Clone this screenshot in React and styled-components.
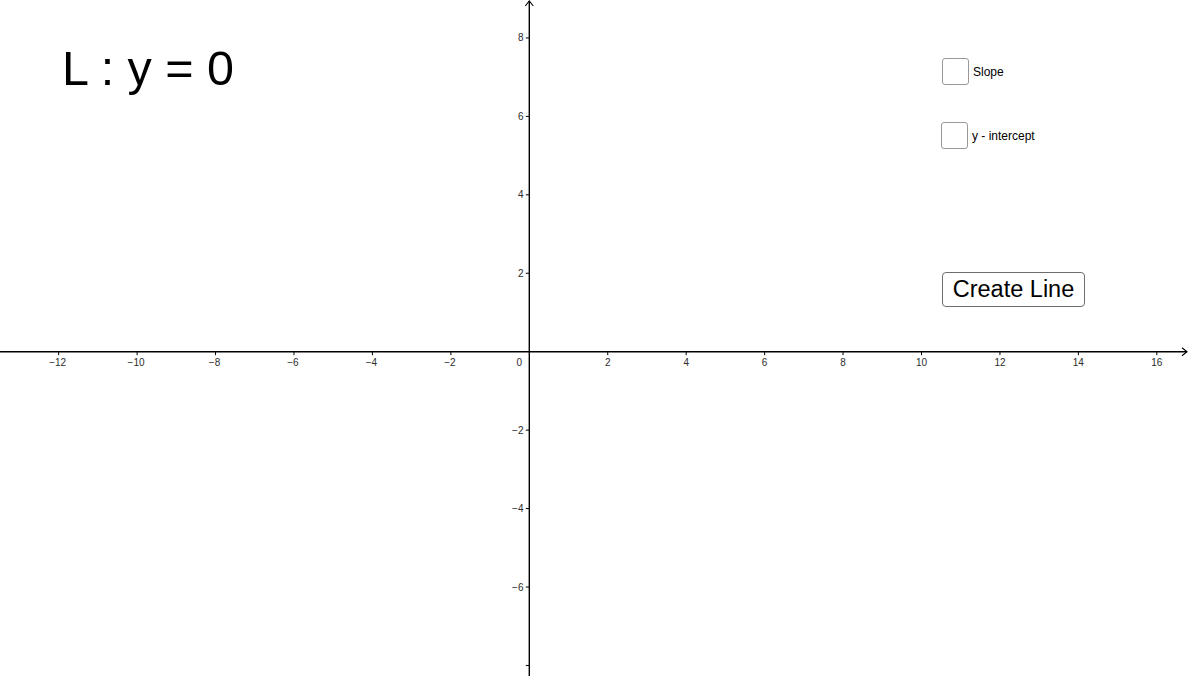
import React from "react";
import styled, { createGlobalStyle } from "styled-components";

const WIDTH = 1190;
const HEIGHT = 676;
const ORIGIN_X = 529.3;
const ORIGIN_Y = 351.7;
const UNIT = 39.22;

const GlobalStyle = createGlobalStyle`
  html, body {
    margin: 0;
    padding: 0;
    background: #ffffff;
    overflow: hidden;
  }
  body {
    font-family: "Liberation Sans", Arial, sans-serif;
  }
`;

const Canvas = styled.main`
  position: relative;
  width: ${WIDTH}px;
  height: ${HEIGHT}px;
  background: #ffffff;
  overflow: hidden;
`;

const Graph = styled.svg`
  display: block;
  width: ${WIDTH}px;
  height: ${HEIGHT}px;
  text {
    font-family: "Liberation Sans", Arial, sans-serif;
    font-size: 10px;
    fill: #2b2b2b;
  }
`;

const Equation = styled.div`
  position: absolute;
  left: 62px;
  top: 44px;
  font-size: 48.5px;
  line-height: 1;
  color: #000000;
  white-space: pre;
`;

const CheckRow = styled.label`
  position: absolute;
  left: ${(p) => p.x}px;
  top: ${(p) => p.y}px;
  display: flex;
  align-items: center;
  gap: 4px;
  font-size: 12px;
  color: #000000;
  cursor: pointer;
`;

const Box = styled.span`
  display: block;
  width: 27px;
  height: 27px;
  box-sizing: border-box;
  border: 1.5px solid #999999;
  border-radius: 3px;
  background: #ffffff;
`;

const Button = styled.button`
  position: absolute;
  left: 942px;
  top: 272px;
  width: 143px;
  height: 35px;
  box-sizing: border-box;
  padding: 0;
  border: 1.5px solid #6e6e6e;
  border-radius: 4px;
  background: #ffffff;
  font-family: "Liberation Sans", Arial, sans-serif;
  font-size: 23.5px;
  color: #000000;
  cursor: pointer;
`;

const fmt = (n) => (n < 0 ? `\u2212${Math.abs(n)}` : `${n}`);

const xTicks = [];
for (let k = -12; k <= 16; k += 2) if (k !== 0) xTicks.push(k);
const yTicks = [8, 6, 4, 2, -2, -4, -6, -8];

const Axes = () => (
  <Graph viewBox={`0 0 ${WIDTH} ${HEIGHT}`}>
    {/* x axis */}
    <line x1="0" y1={ORIGIN_Y} x2="1187" y2={ORIGIN_Y} stroke="#000" strokeWidth="1.4" />
    <polyline
      points={`1182,${ORIGIN_Y - 4} 1187,${ORIGIN_Y} 1182,${ORIGIN_Y + 4}`}
      fill="none"
      stroke="#000"
      strokeWidth="1.1"
    />
    {/* y axis */}
    <line x1={ORIGIN_X} y1="1" x2={ORIGIN_X} y2={HEIGHT} stroke="#000" strokeWidth="1.4" />
    <polyline
      points={`${ORIGIN_X - 4},6 ${ORIGIN_X},1 ${ORIGIN_X + 4},6`}
      fill="none"
      stroke="#000"
      strokeWidth="1.1"
    />

    {xTicks.map((k) => {
      const x = ORIGIN_X + k * UNIT;
      return (
        <g key={`x${k}`}>
          <line x1={x} y1={ORIGIN_Y} x2={x} y2={ORIGIN_Y + 3.5} stroke="#000" strokeWidth="1" />
          <text x={x + (k < 0 ? -1 : 0)} y="365.5" textAnchor="middle">
            {fmt(k)}
          </text>
        </g>
      );
    })}

    {yTicks.map((k) => {
      const y = ORIGIN_Y - k * UNIT;
      return (
        <g key={`y${k}`}>
          <line x1={ORIGIN_X - 3.5} y1={y} x2={ORIGIN_X} y2={y} stroke="#000" strokeWidth="1" />
          {k !== -8 && (
            <text x="523.5" y={y + 3.5} textAnchor="end">
              {fmt(k)}
            </text>
          )}
        </g>
      );
    })}

    <text x="522" y="365.5" textAnchor="end">
      0
    </text>
  </Graph>
);

const App = () => {
  return (
    <Canvas>
      <GlobalStyle />
      <Axes />
      <Equation>L : y = 0</Equation>
      <CheckRow x={942} y={58}>
        <Box />
        Slope
      </CheckRow>
      <CheckRow x={941} y={122}>
        <Box />
        y - intercept
      </CheckRow>
      <Button type="button">Create Line</Button>
    </Canvas>
  );
};

export default App;
